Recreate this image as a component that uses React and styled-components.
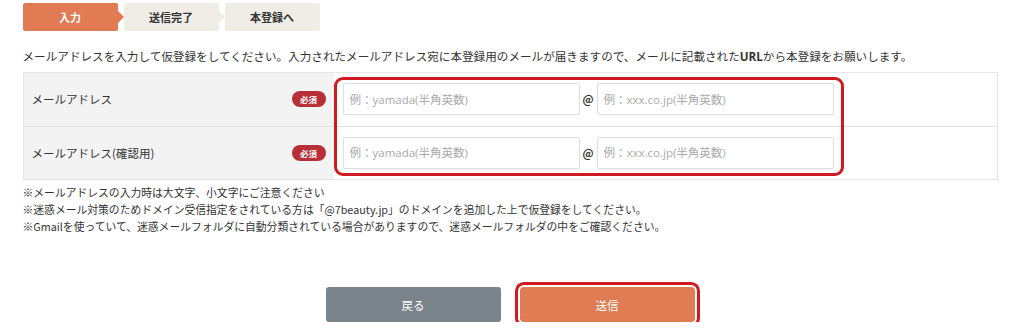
import React from 'react'
import styled, { createGlobalStyle } from 'styled-components'

const Global = createGlobalStyle`
  body {
    margin: 0;
    background: #fff;
    font-family: "Noto Sans CJK JP", "Noto Sans", sans-serif;
    color: #333;
  }
`

const Page = styled.div`
  width: 975px;
  margin: 0 auto;
  padding-top: 3px;
`

const Steps = styled.ol`
  display: flex;
  gap: 6px;
  list-style: none;
  margin: 0;
  padding: 0;
`

const Step = styled.li`
  position: relative;
  width: 95px;
  height: 28px;
  display: flex;
  align-items: center;
  justify-content: center;
  border-radius: 2px;
  font-size: 11px;
  font-weight: 700;
  background: ${(p) => (p.$active ? '#e07b53' : '#efede5')};
  color: ${(p) => (p.$active ? '#fff' : '#333')};

  &::after {
    content: '';
    display: ${(p) => (p.$last ? 'none' : 'block')};
    position: absolute;
    right: -6px;
    top: 8px;
    border-top: 6px solid transparent;
    border-bottom: 6px solid transparent;
    border-left: 6px solid ${(p) => (p.$active ? '#e07b53' : '#efede5')};
  }
`

const Intro = styled.p`
  margin: 16px 0 6px;
  font-size: 11.6px;
  line-height: 18px;
  white-space: nowrap;
  b { font-family: "Open Sans", sans-serif; }
`

const TableWrap = styled.div`
  position: relative;
`

const Table = styled.div`
  border: 1px solid #e6e6e6;
  border-bottom: none;
`

const Row = styled.div`
  display: grid;
  grid-template-columns: 310px 1fr;
  height: 52.5px;
  border-bottom: 1px solid #e3e3e3;
`

const Label = styled.div`
  background: #f3f3f3;
  display: flex;
  align-items: center;
  justify-content: space-between;
  padding: 0 8px 0 8px;
  font-size: 11.5px;
`

const Badge = styled.span`
  width: 34px;
  height: 16px;
  border-radius: 8px;
  background: #b73038;
  color: #fff;
  font-size: 8.5px;
  font-weight: 700;
  display: flex;
  align-items: center;
  justify-content: center;
`

const Fields = styled.div`
  display: flex;
  align-items: center;
  padding-left: 9px;
  gap: 3px;
`

const Input = styled.input`
  width: 237px;
  height: 32px;
  box-sizing: border-box;
  border: 1px solid #dedede;
  border-radius: 2px;
  padding: 0 6px;
  font-size: 11.5px;
  font-family: "Open Sans", "Noto Sans CJK JP", sans-serif;
  color: #333;
  &::placeholder { color: #aaa; }
`

const At = styled.span`
  width: 11px;
  font-size: 11px;
  font-weight: 700;
  text-align: center;
  color: #333;
`

const Highlight = styled.div`
  position: absolute;
  left: 311px;
  top: 5px;
  width: 510px;
  height: 99px;
  box-sizing: border-box;
  border: 3px solid #cf1b1f;
  border-radius: 9px;
  pointer-events: none;
`

const Notes = styled.ul`
  list-style: none;
  margin: 4px 0 0;
  padding: 0;
  font-size: 10.8px;
  line-height: 17px;
  white-space: nowrap;
`

const Buttons = styled.div`
  display: flex;
  justify-content: center;
  gap: 19px;
  margin-top: 52px;
`

const Button = styled.button`
  width: 175px;
  height: 35px;
  border: none;
  font-family: inherit;
  font-size: 11.5px;
  color: #fff;
  background: ${(p) => (p.$primary ? '#e07c54' : '#7b838b')};
  box-shadow: ${(p) => (p.$primary ? '0 0 0 2px #fff, 0 0 0 5px #cf1b1f' : 'none')};
  border-radius: ${(p) => (p.$primary ? '4px' : '3px')};
`

const rows = ['メールアドレス', 'メールアドレス(確認用)']

export default function App() {
  return (
    <>
      <Global />
      <Page>
        <Steps>
          <Step $active>入力</Step>
          <Step>送信完了</Step>
          <Step $last>本登録へ</Step>
        </Steps>
        <Intro>
          メールアドレスを入力して仮登録をしてください。入力されたメールアドレス宛に本登録用のメールが届きますので、メールに記載された<b>URL</b>から本登録をお願いします。
        </Intro>
        <TableWrap>
          <Table>
            {rows.map((label) => (
              <Row key={label}>
                <Label>
                  {label}
                  <Badge>必須</Badge>
                </Label>
                <Fields>
                  <Input placeholder="例：yamada(半角英数)" />
                  <At>@</At>
                  <Input placeholder="例：xxx.co.jp(半角英数)" />
                </Fields>
              </Row>
            ))}
          </Table>
          <Highlight />
        </TableWrap>
        <Notes>
          <li>※メールアドレスの入力時は大文字、小文字にご注意ください</li>
          <li>※迷惑メール対策のためドメイン受信指定をされている方は「@7beauty.jp」のドメインを追加した上で仮登録をしてください。</li>
          <li>※Gmailを使っていて、迷惑メールフォルダに自動分類されている場合がありますので、迷惑メールフォルダの中をご確認ください。</li>
        </Notes>
        <Buttons>
          <Button>戻る</Button>
          <Button $primary>送信</Button>
        </Buttons>
      </Page>
    </>
  )
}
